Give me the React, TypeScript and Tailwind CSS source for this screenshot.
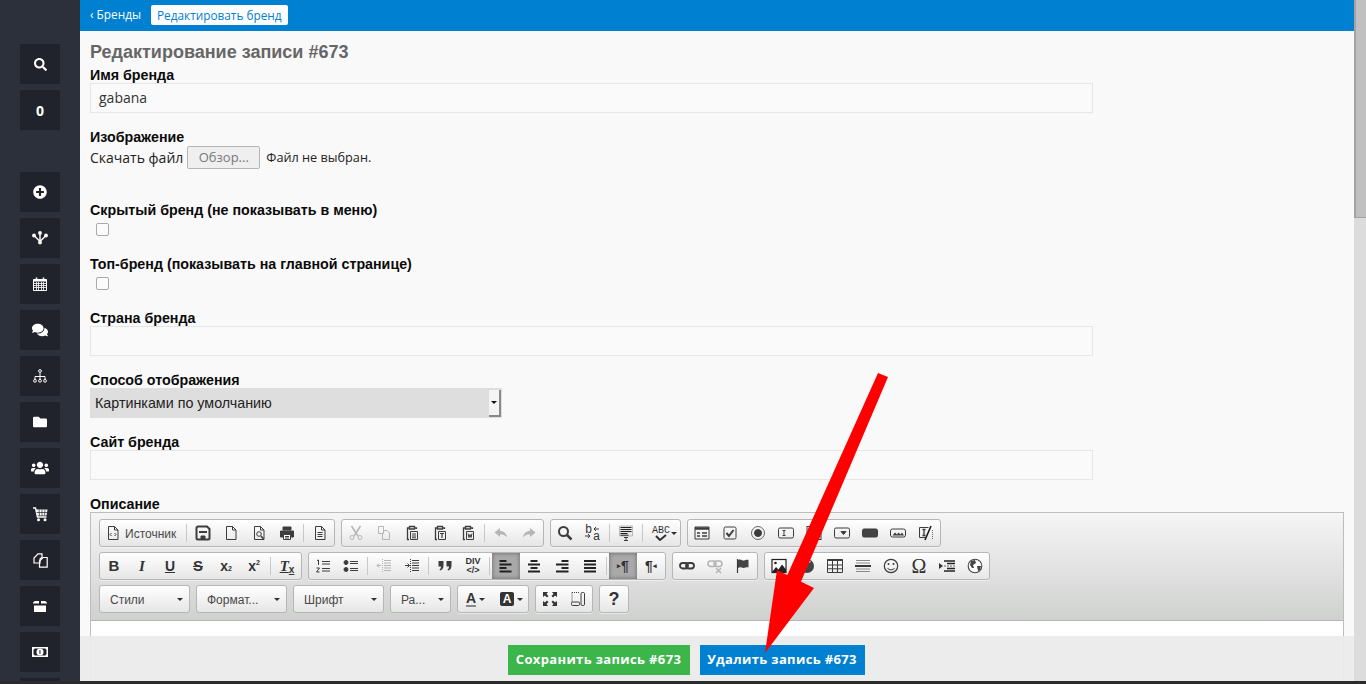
import React from "react";
import { FaSearch, FaPlusCircle, FaComments, FaFolder, FaUsers } from "react-icons/fa";

const S = ({ children, dim }: { children: React.ReactNode; dim?: boolean }) => (
  <svg width="16" height="16" viewBox="0 0 16 16" fill="none" stroke={dim ? "#b5b5b5" : "#3c3c3c"} strokeWidth="1" className="block">{children}</svg>
);
const Page = () => <path d="M3.5 1.5h6l3.5 3.5v9.5h-9.5z M9.5 1.5v3.5h3.5" />;
const Clip = () => <path d="M5 3H3.5v11.5H5 M11 3h1.5v1 M5.5 1.5h5v2.5h-5z" strokeWidth="1.3" />;

const icons: Record<string, React.ReactNode> = {
  source: <S><Page /><path d="M6.5 8l-1.5 1.5 1.5 1.5M9.5 8l1.5 1.5-1.5 1.5" /></S>,
  save: <S><path d="M1.5 3a1.5 1.5 0 0 1 1.5-1.5h9l2.5 2.5v9a1.500 1.500 0 0 1-1.500 1.500h-10a1.500 1.500 0 0 1-1.500-1.500z" strokeWidth="2" /><path d="M4 7h8" strokeWidth="2" /><path d="M6 11h4v3h-4z" fill="#3c3c3c" /></S>,
  newp: <S><Page /></S>,
  preview: <S><Page /><circle cx="8" cy="9" r="2.300" /><path d="M10 11l2.500 3" strokeWidth="1.500" /></S>,
  print: <S><path d="M4 2h8v3h-8z" fill="#3c3c3c" /><path d="M1.500 6h13v6h-13z" fill="#3c3c3c" /><path d="M4.500 9.500h7v5h-7z" fill="#fff" stroke="#3c3c3c" /><path d="M6 11.500h4M6 13h4" /></S>,
  templates: <S><Page /><path d="M5.500 7.500h5M5.500 9.500h5M5.500 11.500h5" /></S>,
  cut: <S dim><circle cx="4" cy="12.500" r="2" /><circle cx="12" cy="12.500" r="2" /><path d="M3.500 1l6.500 10M12.500 1l-6.500 10" strokeWidth="1.500" /></S>,
  copy: <S dim><path d="M2.500 1.500h5v7h-5z" /><path d="M7 5.500h4l2.500 2.500v6.500h-7v-6" /></S>,
  paste: <S><Clip /><path d="M6.500 6.500h7v8h-7zM8 9h4M8 11h4M8 12.800h4" /></S>,
  pastetext: <S><Clip /><path d="M6.500 6.500h7v8h-7z" /><path d="M8 8.500h4M10 8.500v4.500" strokeWidth="1.200" /></S>,
  pasteword: <S><Clip /><path d="M6.500 6.500h7v8h-7z" /><path d="M8 8.500l1 4 1-3 1 3 1-4" /></S>,
  undo: <S dim><path d="M7 3L1.500 7.500 7 12V9.500c3 0 5 .5 7 3-.5-4-3-6.500-7-6.500z" fill="#b5b5b5" stroke="none" /></S>,
  redo: <S dim><path d="M9 3l5.500 4.500L9 12V9.500c-3 0-5 .5-7 3 .5-4 3-6.500 7-6.500z" fill="#b5b5b5" stroke="none" /></S>,
  find: <S><circle cx="6.500" cy="6.500" r="4.500" strokeWidth="2" /><path d="M10 10l4.500 4.500" strokeWidth="2.500" /></S>,
  replace: (
    <svg width="18" height="20" viewBox="0 0 18 20" fill="none" stroke="#3c3c3c" className="block">
      <text x="1" y="10" fontSize="12" fill="#333" stroke="none" fontFamily="Liberation Mono, monospace">b</text>
      <text x="9" y="17" fontSize="12" fill="#333" stroke="none" fontFamily="Liberation Mono, monospace">a</text>
      <path d="M15 6H10M12 4L10 6l2 2M1 13h5M4 11l2 2-2 2" />
    </svg>
  ),
  selectall: <S><path d="M1.500 1h13v10h-13z" fill="#e8e8e8" stroke="#bbb" /><path d="M2.500 2.500h11M2.500 4.500h11M2.500 6.500h11M2.500 8.500h7M2.500 10.200h8" stroke="#222" /><path d="M6 12.500h4M8 12.500v3M6 15.500h4" /></S>,
  form: <S><path d="M1 2h14v12h-14z" /><path d="M1 3.500h14" strokeWidth="2.500" /><path d="M3 8h3M8 8h5M3 11h3M8 11h5" strokeWidth="1.500" /></S>,
  checkbox: <S><rect x="2" y="2" width="12" height="12" rx="1.500" /><path d="M4.500 8l2.500 3 4.500-6" strokeWidth="2" /></S>,
  radio: <S><circle cx="8" cy="8" r="6.500" stroke="#666" /><circle cx="8" cy="8" r="3.500" fill="#3c3c3c" /></S>,
  textf: <S><rect x="0.500" y="3" width="15" height="10" rx="1.500" /><path d="M4.500 5.500h3M6 5.500v5M4.500 10.500h3" /></S>,
  textarea: <S><rect x="1" y="1.500" width="14" height="13" /><path d="M4.500 4h3.500M6.200 4v8M4.500 12h3.500" strokeWidth="1.300" /><path d="M10 14l5-5M12 14l3-3" stroke="#777" /></S>,
  select: <S><rect x="0.500" y="3" width="15" height="10" rx="1.500" /><path d="M7 6.500h5l-2.500 3z" fill="#3c3c3c" /></S>,
  button: <S><rect x="0.500" y="4" width="15" height="8" rx="1.500" fill="#444" /></S>,
  imgbtn: <S><rect x="0.500" y="4" width="15" height="8" rx="2" /><path d="M2.500 10.500l2.500-3 2 2 1.500-2 2 2 1.500-2 2 3z" fill="#3c3c3c" stroke="none" /></S>,
  hidden: <S><path d="M1.500 2.500h9M1.500 12.500h6M1.500 2.500v10" /><path d="M4.500 4.500h3M6 4.500v6M4.500 10.500h3" strokeWidth="1.300" /><path d="M7 15L13 1" strokeWidth="1.500" stroke="#111" /><path d="M14.500 5v9" stroke="#666" strokeDasharray="1 1" /></S>,
  ol: <S><path d="M7 3.500h8M7 6h8M7 10.500h8M7 13h8" /><path d="M2 2.500l1.500-.5v5M1.500 10h3l-3 4h3" /></S>,
  ul: <S><circle cx="3" cy="4.500" r="2" fill="#3c3c3c" /><circle cx="3" cy="11.500" r="2" fill="#3c3c3c" /><path d="M7 3.500h8M7 5.500h8M7 10.500h8M7 12.500h8" /></S>,
  outdent: <S dim><path d="M8 2.500h7M8 5h7M8 7.500h7M8 10h7M8 12.500h7M1 7.500h4M3 5.500L1 7.500l2 2" /><path d="M6.500 1v14" strokeDasharray="1 1" /></S>,
  indent: <S><path d="M8 2.500h7M8 5h7M8 7.500h7M8 10h7M8 12.500h7M1 7.500h4M3.500 5.500l2 2-2 2" /><path d="M6.500 1v14" strokeDasharray="1 1" /></S>,
  quote: <S><path d="M1.500 3h5v4.500c0 3-1.500 4.500-3.500 5l-.5-1c1-.5 1.500-1.500 1.500-3H1.500zM9.500 3h5v4.500c0 3-1.500 4.500-3.500 5l-.5-1c1-.5 1.500-1.500 1.500-3h-2.500z" fill="#3c3c3c" stroke="none" /></S>,
  left: <S><path d="M1.500 3h7M1.500 6.500h12M1.500 10h7M1.500 13.500h12" strokeWidth="2" stroke="#222" /></S>,
  center: <S><path d="M4.500 3h7M2 6.500h12M4.500 10h7M2 13.500h12" strokeWidth="2" stroke="#222" /></S>,
  right: <S><path d="M7.500 3h7M2 6.500h12.500M7.500 10h7M2 13.500h12.500" strokeWidth="2" stroke="#222" /></S>,
  justify: <S><path d="M2 3h12M2 6.500h12M2 10h12M2 13.500h12" strokeWidth="2" stroke="#222" /></S>,
  link: <S><rect x="1" y="5" width="8" height="5.500" rx="2.700" strokeWidth="1.800" /><rect x="7" y="5" width="8" height="5.500" rx="2.700" strokeWidth="1.800" /></S>,
  unlink: <S dim><rect x="1" y="3" width="8" height="5.500" rx="2.700" strokeWidth="1.500" /><rect x="7" y="3" width="8" height="5.500" rx="2.700" strokeWidth="1.500" /><path d="M9 10l5 5M14 10l-5 5" strokeWidth="1.500" /></S>,
  anchor: <S><path d="M2.500 1v14" strokeWidth="1.200" /><path d="M3 2c3-1.500 4 1 6 .500s3-1 4.500-.500v7.500c-2-.5-3 .5-5 .500s-3-1.500-5.500 0z" fill="#444" stroke="none" /></S>,
  image: <S><rect x="1" y="1.500" width="14" height="13" fill="#fff" stroke="#222" strokeWidth="1.200" /><circle cx="4.500" cy="5" r="1.300" fill="#222" stroke="none" /><path d="M1 14l4-5 2.500 2.500L11 6.500l4 5v3z" fill="#222" stroke="none" /></S>,
  flash: <S><circle cx="8" cy="8" r="7" fill="#444" stroke="none" /><path d="M11.500 3.500c-3 0-3.500 2-4.500 4.500s-1.500 4-3.500 4" stroke="#eee" strokeWidth="1.500" /></S>,
  table: <S><path d="M.5 1.500h15v13H.5z" /><path d="M.5 2h15" strokeWidth="2" /><path d="M.5 7h15M.5 10.800h15M5.500 3v11.500M10.500 3v11.500" /></S>,
  hr: <S><path d="M1 2.500h14M1 5h14M1 11h14M1 13.500h14" stroke="#888" /><path d="M0 8h16" strokeWidth="1.800" stroke="#222" /></S>,
  smile: <S><circle cx="8" cy="8" r="6.700" strokeWidth="1.200" /><circle cx="5.500" cy="6" r="1" fill="#3c3c3c" stroke="none" /><circle cx="10.500" cy="6" r="1" fill="#3c3c3c" stroke="none" /><path d="M4.500 10c1.500 2.500 5.500 2.500 7 0" /></S>,
  pagebreak: <S><path d="M0 5v6l4-3z" fill="#333" stroke="none" /><path d="M5 3h11M8 5.500h8M8 10.500h8M5 13h11" strokeWidth="1.500" stroke="#222" /><path d="M5 8h11" strokeDasharray="2 1" stroke="#666" /></S>,
  globe: <S><circle cx="8" cy="8" r="6.800" fill="#fff" stroke="#444" strokeWidth="1.100" /><path d="M4 3l4-1 1 3-3 2 1 3-2 0-2-3zM10 8l4 0-1 4-2 1z" fill="#444" stroke="none" /></S>,
  maximize: <S><path d="M1 1h5L4.500 3 6.500 5 5 6.500 3 4.500 1 6zM15 1v5L13 4.500 11 6.500 9.500 5l2-2L10 1zM1 15v-5l2 1.500 2-2L6.500 11l-2 2L6 15zM15 15h-5l1.500-2-2-2L11 9.500l2 2 2-1.500z" fill="#333" stroke="none" /></S>,
  blocks: <S><path d="M2 1.500h7M2 1.500v9" strokeDasharray="1 1" /><rect x="1.500" y="11" width="8" height="3.500" rx="1.200" /><rect x="11" y="1.500" width="3.500" height="13" rx="1.200" /></S>,
};

const Sep = () => <span className="my-[4px] mx-[2px] w-[1px] self-stretch bg-[#c8c8c8]" />;

const Btn = ({ i, on }: { i: string; on?: boolean }) => (
  <span className={`flex h-[26px] w-[28px] items-center justify-center ${on ? "bg-[#a9a9a9] shadow-[inset_0_0_4px_#666]" : ""}`}>{icons[i]}</span>
);

const Glyph = ({ children, className = "" }: { children: React.ReactNode; className?: string }) => (
  <span className={`flex h-[26px] w-[28px] items-center justify-center text-[#333] font-['Liberation_Sans',sans-serif] ${className}`}>{children}</span>
);

const Group = ({ children }: { children: React.ReactNode }) => (
  <div className="flex h-[28px] items-center rounded-[3px] border border-[#b6b6b6] bg-gradient-to-b from-[#ffffff] to-[#e6e6e6] shadow-[0_1px_0_rgba(255,255,255,0.5)]">{children}</div>
);

const Caret = () => <span className="block h-0 w-0 border-x-[3.500px] border-t-[3.500px] border-x-transparent border-t-[#2f2f2f]" />;

const Combo = ({ label, w }: { label: string; w: string }) => (
  <div className={`flex h-[28px] items-center justify-between rounded-[3px] border border-[#b6b6b6] bg-gradient-to-b from-[#ffffff] to-[#e6e6e6] pl-[10px] pr-[6px] text-[12px] text-[#484848] font-['Liberation_Sans',sans-serif] ${w}`}>
    <span className="pt-[2px]">{label}</span>
    <Caret />
  </div>
);

const labelCls = "h-[16px] text-[14.25px] leading-[16px] font-bold text-[#0a0a0a] font-['Liberation_Sans',sans-serif] whitespace-nowrap";

const Field = ({ label, value, className = "" }: { label: string; value?: string; className?: string }) => (
  <div className={className}>
    <div className={labelCls}>{label}</div>
    <div className="h-[30px] w-[1003px] border border-[#e6e6e6] bg-[#fafafa] px-[8px] text-[14px] leading-[28px] text-[#333] font-['Open_Sans',sans-serif]">{value}</div>
  </div>
);

const Check = ({ label, className = "" }: { label: string; className?: string }) => (
  <div className={className}>
    <div className={labelCls}>{label}</div>
    <div className="ml-[6px] mt-[5px] h-[13px] w-[13px] rounded-[2px] border border-[#a9a9a9] bg-[#fbfbfb]" />
  </div>
);

const Hub = () => (
  <svg width="16" height="14" viewBox="0 0 16 14" fill="none" stroke="white" strokeWidth="1.400">
    <circle cx="8" cy="2" r="1.900" fill="white" stroke="none" /><circle cx="2" cy="4.500" r="1.900" fill="white" stroke="none" /><circle cx="14" cy="4.500" r="1.900" fill="white" stroke="none" /><circle cx="8" cy="11.500" r="1.900" fill="white" stroke="none" />
    <path d="M8 2v9M2 4.500l6 6M14 4.500l-6 6" />
  </svg>
);
const Calendar = () => (
  <svg width="14" height="14" viewBox="0 0 14 14" fill="none" stroke="white" strokeWidth="1">
    <path d="M.5 2.500h13v11H.5z" /><path d="M.5 3.500h13" strokeWidth="2" />
    <path d="M3.500 .5v3M10.500 .5v3" strokeWidth="1.600" />
    <path d="M.5 6.500h13M.5 8.500h13M.5 10.500h13M3.500 5v8M5.500 5v8M8.500 5v8M10.500 5v8" strokeWidth="0.800" />
  </svg>
);
const Tree = () => (
  <svg width="14" height="14" viewBox="0 0 14 14" fill="none" stroke="white" strokeWidth="1">
    <circle cx="7" cy="2" r="1.400" /><path d="M7 3.500v7M2 10.500V7.500h10v3" />
    <circle cx="2" cy="11.800" r="1.400" /><circle cx="7" cy="11.800" r="1.400" /><circle cx="12" cy="11.800" r="1.400" />
  </svg>
);
const Cart = () => (
  <svg width="15" height="15" viewBox="0 0 15 15" fill="none" stroke="white" strokeWidth="1">
    <path d="M0 1h2.500l2 9h9" strokeWidth="1.400" />
    <path d="M3 2.500h11.500l-1 6h-9z" fill="white" stroke="none" />
    <path d="M6 2.500l.5 6M9 2.500v6M12 2.500l-.5 6M3.500 5.500h11" stroke="#20232b" strokeWidth="0.700" />
    <circle cx="5.500" cy="12.800" r="1.500" fill="white" stroke="none" /><circle cx="12" cy="12.800" r="1.500" fill="white" stroke="none" />
  </svg>
);
const Docs = () => (
  <svg width="15" height="15" viewBox="0 0 15 15" fill="none" stroke="white" strokeWidth="1.200">
    <path d="M5 .8h4v3.500L7 6v4H1V5z" /><path d="M10 4.500h4.200v9.700H6.500V8z" />
  </svg>
);
const Gift = () => (
  <svg width="14" height="14" viewBox="0 0 14 14" fill="white">
    <path d="M0 4.500c0-1.500 1-2.500 2.500-2.500h3.500l0 2.500zM8 2h3.500c1.500 0 2.500 1 2.500 2.500H8zM1 6.500h12V13H1z" />
  </svg>
);
const Bill = () => (
  <svg width="16" height="12" viewBox="0 0 16 12" fill="white">
    <path fillRule="evenodd" d="M0 1h16v10H0zM2.500 2.500a1 1 0 0 1-1 1v5a1 1 0 0 1 1 1h11a1 1 0 0 1 1-1v-5a1 1 0 0 1-1-1z" />
    <circle cx="8" cy="6" r="3.500" />
    <path d="M7.300 4.300h1.200v3.400h-1z" fill="#20232b" />
  </svg>
);

const side: React.ReactNode[] = [
  <FaPlusCircle size={14} />, <Hub />, <Calendar />, <FaComments size={16} />, <Tree />, <FaFolder size={14} />,
  <FaUsers size={18} />, <Cart />, <Docs />, <Gift />, <Bill />, null,
];

const SideBtn = ({ children }: { children?: React.ReactNode }) => (
  <div className="flex h-[40px] w-[40px] shrink-0 items-center justify-center bg-[#20232b] text-white">{children}</div>
);

export default function App() {
  return (
    <div className="relative flex h-[684px] w-[1366px] flex-col overflow-hidden bg-[#2b2b2b]">
      <div className="flex h-[681px] w-full">
        <aside className="flex h-full w-[80px] shrink-0 flex-col items-center gap-[6px] overflow-hidden bg-[#2b303a] pt-[44px]">
          <SideBtn><FaSearch size={13} /></SideBtn>
          <SideBtn><span className="text-[14px] font-bold font-['Open_Sans',sans-serif]">0</span></SideBtn>
          <div className="h-[30px] shrink-0" />
          {side.map((ic, n) => <SideBtn key={n}>{ic}</SideBtn>)}
        </aside>

        <main className="flex h-full min-w-0 flex-1 flex-col overflow-hidden bg-[#f9f9f9]">
          <div className="flex h-[31px] shrink-0 items-center bg-[#0080d0] pl-[10px] pb-[1px] text-[11.800px] text-white font-['Open_Sans',sans-serif]">
            <span>‹ Бренды</span>
            <span className="ml-[10px] rounded-[2px] bg-white px-[6px] leading-[20px] text-[#0080d0]">Редактировать бренд</span>
          </div>
          <div className="px-[10px]">
            <h1 className="mt-[10px] h-[22px] text-[18px] leading-[22px] font-bold text-[#666] font-['Liberation_Sans',sans-serif]">Редактирование записи #673</h1>
            <Field label="Имя бренда" value="gabana" className="mt-[4px]" />
            <div className={`mt-[16px] ${labelCls}`}>Изображение</div>
            <div className="mt-[1px] flex h-[23px] items-center font-['Open_Sans',sans-serif]">
              <span className="text-[14px] text-[#222]">Скачать файл</span>
              <span className="ml-[4px] flex h-[23px] w-[73px] items-center justify-center rounded-[2px] border border-[#b5b5b5] bg-[#efefef] text-[13px] text-[#777]">Обзор...</span>
              <span className="ml-[6px] text-[12.700px] text-[#222]">Файл не выбран.</span>
            </div>
            <Check label="Скрытый бренд (не показывать в меню)" className="mt-[33px]" />
            <Check label="Топ-бренд (показывать на главной странице)" className="mt-[20px]" />
            <Field label="Страна бренда" className="mt-[20px]" />
            <div className={`mt-[16px] ${labelCls}`}>Способ отображения</div>
            <div className="flex h-[30px] w-[412px] items-center justify-between bg-[#dedede] pl-[5px] text-[14.300px] text-[#222] font-['Liberation_Sans',sans-serif]">
              <span className="pt-[1px]">Картинками по умолчанию</span>
              <span className="mr-[1px] flex h-[27px] w-[12px] items-center justify-center border-r-2 border-b-2 border-[#8a8a8a] bg-[#f4f4f4]"><span className="h-0 w-0 border-x-[3px] border-t-[3px] border-x-transparent border-t-[#111]" /></span>
            </div>
            <Field label="Сайт бренда" className="mt-[16px]" />
            <div className={`mt-[16px] ${labelCls}`}>Описание</div>
            <div className="w-[1254px] border border-[#bdbdbd] bg-white">
              <div className="flex h-[108px] flex-col gap-[5px] border-b border-[#b6b6b6] bg-gradient-to-b from-[#f5f5f5] to-[#cfd1cf] pl-[8px] pt-[6px]">
                <div className="flex gap-[6px]">
                  <Group>
                    <span className="flex h-[26px] w-[84px] items-center pl-[5px] text-[12px] text-[#484848] font-['Liberation_Sans',sans-serif]">{icons.source}<span className="ml-[4px] pt-[2px]">Источник</span></span>
                    <Sep />
                    <Btn i="save" /><Btn i="newp" /><Btn i="preview" /><Btn i="print" />
                    <Sep />
                    <Btn i="templates" />
                  </Group>
                  <Group>
                    <Btn i="cut" /><Btn i="copy" /><Btn i="paste" /><Btn i="pastetext" /><Btn i="pasteword" />
                    <Sep />
                    <Btn i="undo" /><Btn i="redo" />
                  </Group>
                  <Group>
                    <Btn i="find" />
                    <Btn i="replace" />
                    <Sep />
                    <Btn i="selectall" />
                    <Sep />
                    <span className="flex h-[26px] w-[35px] items-center pl-[7px]">
                      <span className="flex flex-col items-center text-[10px] leading-[9px] text-[#333] font-['Liberation_Mono',monospace]">ABC<svg className="-mt-[1px]" width="16" height="7" viewBox="0 0 16 7" fill="none" stroke="#333" strokeWidth="2"><path d="M3 2l4 4 6-5" /></svg></span>
                      <span className="ml-[1px]"><Caret /></span>
                    </span>
                  </Group>
                  <Group>
                    <Btn i="form" /><Btn i="checkbox" /><Btn i="radio" /><Btn i="textf" /><Btn i="textarea" /><Btn i="select" /><Btn i="button" /><Btn i="imgbtn" /><Btn i="hidden" />
                  </Group>
                </div>
                <div className="flex gap-[6px]">
                  <Group>
                    <Glyph className="text-[15px] font-bold">B</Glyph>
                    <Glyph className="text-[15px] font-bold italic font-['Liberation_Serif',serif]">I</Glyph>
                    <Glyph className="text-[14px] font-bold underline">U</Glyph>
                    <Glyph className="text-[15px] font-bold line-through">S</Glyph>
                    <Glyph className="text-[14px] font-bold">x<span className="mt-[6px] text-[7px]">2</span></Glyph>
                    <Glyph className="text-[14px] font-bold">x<span className="-mt-[5px] text-[7px]">2</span></Glyph>
                    <Sep />
                    <Glyph className="text-[15px] font-bold italic underline font-['Liberation_Serif',serif]">T<span className="mt-[6px] text-[10px] not-italic no-underline font-['Liberation_Sans',sans-serif]">x</span></Glyph>
                  </Group>
                  <Group>
                    <Btn i="ol" /><Btn i="ul" />
                    <Sep />
                    <Btn i="outdent" /><Btn i="indent" />
                    <Sep />
                    <Btn i="quote" />
                    <Glyph className="flex-col text-[9px] leading-[9px] font-bold"><span>DIV</span><span>&lt;/&gt;</span></Glyph>
                    <Sep />
                    <Btn i="left" on /><Btn i="center" /><Btn i="right" /><Btn i="justify" />
                    <Sep />
                    <Glyph className="bg-[#a9a9a9] text-[14px] font-bold shadow-[inset_0_0_4px_#666]"><span className="text-[7px]">▸</span>¶</Glyph>
                    <Glyph className="text-[14px] font-bold">¶<span className="text-[7px]">◂</span></Glyph>
                  </Group>
                  <Group>
                    <Btn i="link" /><Btn i="unlink" /><Btn i="anchor" />
                  </Group>
                  <Group>
                    <Btn i="image" /><Btn i="flash" /><Btn i="table" /><Btn i="hr" /><Btn i="smile" />
                    <Glyph className="text-[20px] font-['Liberation_Serif',serif]">Ω</Glyph>
                    <Btn i="pagebreak" /><Btn i="globe" />
                  </Group>
                </div>
                <div className="flex gap-[6px]">
                  <Combo label="Стили" w="w-[91px]" />
                  <Combo label="Формат..." w="w-[91px]" />
                  <Combo label="Шрифт" w="w-[91px]" />
                  <Combo label="Ра..." w="w-[61px]" />
                  <Group>
                    <span className="flex h-[26px] w-[35px] items-center pl-[8px]">
                      <span className="border-b-2 border-[#888] text-[14px] leading-[13px] font-bold text-[#333] font-['Liberation_Sans',sans-serif]">A</span>
                      <span className="ml-[3px]"><Caret /></span>
                    </span>
                    <span className="flex h-[26px] w-[35px] items-center pl-[7px]">
                      <span className="flex h-[14px] w-[14px] items-center justify-center rounded-[2px] bg-[#333] text-[12px] font-bold text-white font-['Liberation_Sans',sans-serif]">A</span>
                      <span className="ml-[3px]"><Caret /></span>
                    </span>
                  </Group>
                  <Group><Btn i="maximize" /><Btn i="blocks" /></Group>
                  <Group><Glyph className="text-[18px] font-bold">?</Glyph></Group>
                </div>
              </div>
              <div className="h-[100px]" />
            </div>
          </div>
        </main>

        <div className="h-full w-[12px] shrink-0 bg-[#dcdcdc]">
          <div className="h-[218px] border-b border-l-2 border-[#a3a3a3] bg-[#c0c0c0]" />
        </div>
      </div>
      <div className="h-[3px] shrink-0 bg-[#2b2b2b]" />

      <div className="absolute bottom-[3px] left-[80px] flex h-[45px] w-[1274px] items-start justify-center gap-[10px] bg-[#ebebeb]/95 pt-[9px] pr-[62px] text-[13px] font-bold tracking-[0.35px] text-white font-['Open_Sans',sans-serif]">
        <span className="flex h-[30px] w-[182px] items-center justify-center bg-[#3cb54a]">Сохранить запись #673</span>
        <span className="flex h-[30px] w-[165px] items-center justify-center bg-[#0080d0]">Удалить запись #673</span>
      </div>

      <svg className="absolute left-0 top-0" width="1366" height="684" viewBox="0 0 1366 684">
        <path d="M878 373L888 377L800 584L786 578Z" fill="#ff0000" />
        <path d="M765 653L777 570L814 588Z" fill="#ff0000" />
      </svg>
    </div>
  );
}
